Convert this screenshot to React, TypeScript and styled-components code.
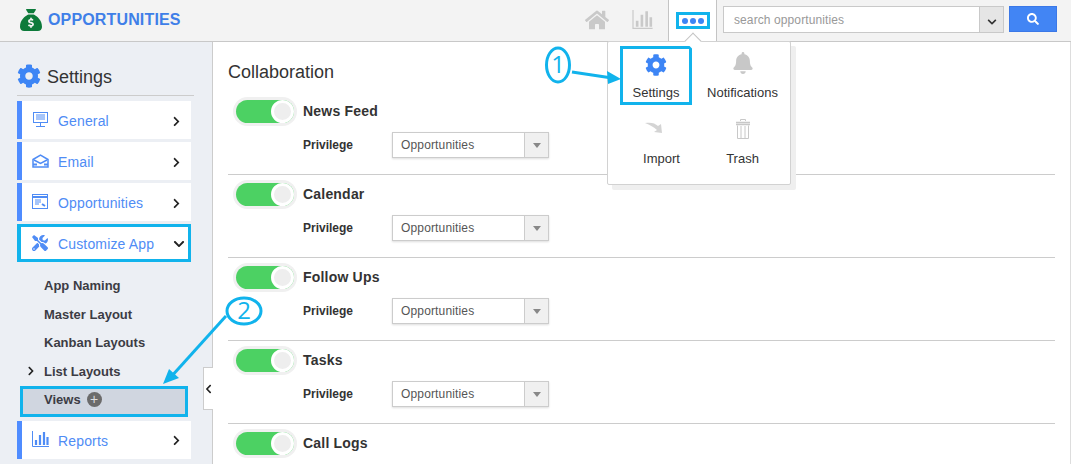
import React from "react";
import styled, { createGlobalStyle } from "styled-components";
import { FaCog, FaHome, FaBell, FaTools, FaSearch, FaChevronRight, FaChevronDown, FaChevronLeft } from "react-icons/fa";
import { FaSackDollar } from "react-icons/fa6";

const Global = createGlobalStyle`
  html, body { margin: 0; padding: 0; background: #fff; }
  body { font-family: "Liberation Sans", Arial, sans-serif; color: #333; width: 1071px; height: 464px; overflow: hidden; }
  * { box-sizing: border-box; }
`;
const Page = styled.div`position: relative; width: 1071px; height: 464px; overflow: hidden; display: flex; flex-direction: column;`;
const Header = styled.header`height: 42px; flex: none; display: flex; align-items: stretch; background: #f3f3f3; border-bottom: 1px solid #c8c8c8; padding-left: 20px;`;
const Brand = styled.div`display: flex; align-items: center; gap: 6px; color: #3f7fe8; font-weight: 700; font-size: 16px; letter-spacing: 0.15px; height: 40px; width: 560px;
  svg { color: #0d7a3a; margin-top: -1px; }`;
const TopIcons = styled.div`display: flex; align-items: center; gap: 23px; color: #c9c9c9; margin-left: 5px; width: 83px; padding-bottom: 2px;`;
const MoreCell = styled.div`position: relative; width: 49px; height: 42px; background: #fff; border-left: 1px solid #c4c4c4; border-right: 1px solid #c4c4c4; margin-bottom: -1px; display: flex; align-items: flex-start; justify-content: center; padding-top: 12px;`;
const MoreBox = styled.div`width: 34px; height: 17px; border: 3px solid #11b3ec; display: flex; align-items: center; justify-content: center; gap: 2px;`;
const Dot = styled.span`width: 6px; height: 6px; border-radius: 50%; background: #3d85f5;`;
const SearchArea = styled.div`display: flex; align-items: flex-start; padding: 6px 0 0 6px;`;
const SearchInput = styled.div`width: 256px; height: 27px; background: #fff; border: 1px solid #c9c9c9; border-right: 0; font-size: 12px; letter-spacing: 0.1px; color: #999; display: flex; align-items: center; padding-left: 10px;`;
const SearchCaret = styled.div`width: 25px; height: 27px; background: #e5e5e5; border: 1px solid #c9c9c9; display: flex; align-items: flex-end; justify-content: center; padding-bottom: 5px; color: #333;`;
const SearchBtn = styled.button`width: 48px; height: 26px; margin-left: 5px; background: #4285f4; border: 1px solid #3b78e7; color: #fff; padding: 0; display: flex; align-items: center; justify-content: center;`;

const Body = styled.div`flex: 1; display: flex; min-height: 0;`;
const Sidebar = styled.aside`position: relative; width: 213px; flex: none; background: #eceff4; border-right: 1px solid #ccc; padding: 20px 0 0 17px;`;
const SideTitle = styled.div`width: 177px; height: 34px; border-bottom: 1px solid #ccc; display: flex; align-items: flex-start; gap: 6px; font-size: 18px; color: #333; padding-top: 2px; margin-bottom: 5px; svg { color: #3d85f5; } span { margin-top: 3px; }`;
const NavItem = styled.div<{ $framed?: boolean }>`
  width: 174px; height: 38px; background: #fff; border-left: 5px solid #4f8cff; margin-bottom: 3px; padding: 2px 9px 0 10px;
  display: flex; align-items: center; color: #4f8cf5; font-size: 14px; letter-spacing: 0.15px;
  ${(p) => p.$framed && `border: 3px solid #11b3ec; border-left: 4px solid #11b3ec; padding-left: 11px; padding-right: 3px; width: 174px; margin-top: 1px;`}
`;
const NavIcon = styled.span`width: 26px; flex: none; display: flex; align-items: center; margin-top: -3px; color: #4f8cf5;`;
const NavLabel = styled.span`flex: 1;`;
const NavChev = styled.span`display: flex; color: #222;`;
const SubList = styled.div`padding: 6px 0 4px 3px; display: flex; flex-direction: column;`;
const SubItem = styled.div`position: relative; height: 28.7px; padding-left: 24px; display: flex; align-items: center; font-size: 13px; font-weight: 700; color: #3c3c44; svg { position: absolute; left: 6px; top: 9px; color: #222; }`;
const ViewsRow = styled.div`width: 168px; height: 31px; background: #d0d6e0; border: 3px solid #11b3ec; display: flex; align-items: center; gap: 6px; padding: 0 0 4px 21px; font-size: 13px; font-weight: 700; color: #3c3c44;`;
const PlusBadge = styled.span`width: 15px; height: 15px; border-radius: 50%; background: #6b6b6b; color: #ddd; font-size: 14px; line-height: 14px; font-weight: 400; text-align: center;`;
const Collapse = styled.div`position: absolute; left: 203px; top: 325px; width: 10px; height: 43px; background: #fff; border: 1px solid #ccc; border-right: 0; display: flex; align-items: center; justify-content: center; color: #222;`;

const Main = styled.main`flex: 1; background: #fff; padding: 20px 15px 0 15px; border-right: 1px solid #ddd;`;
const Heading = styled.h2`margin: 0 0 9px; font-size: 18px; font-weight: 400; line-height: 21px; color: #333;`;
const Section = styled.section`height: 83px; border-bottom: 1px solid #ccc; padding: 6px 0 0 8px;`;
const SectionHead = styled.div`display: flex; align-items: center; gap: 9px; height: 26px;`;
const Toggle = styled.div`position: relative; width: 58px; height: 23px; border-radius: 12px; background: #4cd163; box-shadow: 0 0 0 3px #f0f0f0;`;
const Knob = styled.span`position: absolute; right: 0; top: 0; width: 23px; height: 23px; border-radius: 50%; background: #eee; border: 3px solid #fff;`;
const SectionName = styled.span`font-size: 14px; font-weight: 700; letter-spacing: 0.2px; color: #333;`;
const PrivRow = styled.div`display: flex; align-items: center; margin: 8px 0 0 67px; height: 26px;`;
const PrivLabel = styled.span`width: 89px; font-size: 12px; font-weight: 700; color: #333;`;
const Select = styled.div`width: 157px; height: 26px; display: flex; border: 1px solid #ccc; background: #fff; box-shadow: 0 1px 2px #ddd;`;
const SelectValue = styled.span`flex: 1; font-size: 12px; letter-spacing: 0.15px; color: #555; display: flex; align-items: center; padding-left: 8px;`;
const SelectArrow = styled.span`width: 24px; background: #f0f0f0; border-left: 1px solid #ccc; display: flex; align-items: center; justify-content: center;
  &::before { content: ""; border: 4px solid transparent; border-top: 5px solid #888; border-bottom: 0; }`;

const Popup = styled.div`position: absolute; left: 607px; top: 41px; width: 184px; height: 144px; background: #fff; border: 1px solid #d2d2d2; border-radius: 2px; box-shadow: 5px 5px 0 #efefef; display: grid; grid-template-columns: 90px 90px; grid-template-rows: 66px 66px; padding-top: 2px;
  &::before { content: ""; position: absolute; left: 79px; top: -7px; width: 11px; height: 11px; background: #fff; border-left: 1px solid #c4c4c4; border-top: 1px solid #c4c4c4; transform: rotate(45deg); }`;
const PopItem = styled.div<{ $framed?: boolean }>`display: flex; flex-direction: column; align-items: center; gap: 11px; font-size: 13px; color: #333; padding-top: 6px; height: 59px; width: 89px; margin: 2px 0 0 0; svg { height: 22px; color: #c8c8c8; }
  ${(p) => p.$framed && `width: 72px; margin: 2px 0 0 12px; border: 3px solid #11b3ec; padding-top: 5px; gap: 9px; svg { color: #3d85f5; }`}`;
const ImportItem = styled(PopItem)`padding-left: 18px; svg { margin-left: -12px; }`;
const Annot = styled.svg`position: absolute; left: 0; top: 0; pointer-events: none;`;
const AnnotNum = styled.div<{ $x: number; $y: number }>`position: absolute; left: ${(p) => p.$x}px; top: ${(p) => p.$y}px; width: 26px; height: 24px; font-size: 24px; font-weight: 400; font-family: "Open Sans", sans-serif; line-height: 24px; text-align: center; color: #11b3ec;`;

const sections = [
  { name: "News Feed", privilege: true },
  { name: "Calendar", privilege: true },
  { name: "Follow Ups", privilege: true },
  { name: "Tasks", privilege: true },
  { name: "Call Logs", privilege: false },
];

const Monitor = () => (
  <svg width="17" height="16" viewBox="0 0 17 16" fill="none" stroke="currentColor"><rect x="1.5" y="0.5" width="14" height="10" /><path d="M4 3h9M4 5h9M4 7h9M8.5 11v3M4 14.5h9" /></svg>
);
const Env = () => (
  <svg width="17" height="14" viewBox="0 0 17 14" fill="none" stroke="currentColor"><path d="M1 5.5 8.5 1 16 5.5V13H1z" strokeWidth="1.5" /><path d="M2 6l6.5 3.5L15 6" strokeWidth="1.5" /><path d="M1 10.5h4M12 10.5h4" strokeWidth="2" /></svg>
);
const AppWin = () => (
  <svg width="16" height="15" viewBox="0 0 16 15" fill="none" stroke="currentColor"><rect x="0.5" y="0.5" width="15" height="14" /><path d="M1 3h14" strokeWidth="2" /><path d="M3 6h6M3 8h6M3 10h4" /><path d="M10 10l3 2" strokeWidth="2" /></svg>
);
const Bars = ({ h = 16, w = 17 }: { h?: number; w?: number }) => (
  <svg width={w} height={h} viewBox="0 0 17 16" fill="none" stroke="currentColor"><path d="M.5 0v15.5H17" /><path d="M4 14V9M8 14V4M12 14V1M15.5 14V6" strokeWidth="2.2" /></svg>
);
const Trash = () => (
  <svg width="16" height="22" viewBox="0 0 16 22" fill="none" stroke="#c8c8c8"><path d="M1 6.5h14M1 4.5h14" strokeWidth="1.5" /><path d="M5.5 3V1.5h5V3" /><path d="M2.5 7.5v13h11v-13M6 8v12M10 8v12" /></svg>
);
const ImportArrow = () => (
  <svg width="22" height="22" viewBox="0 0 22 22" fill="#d4d4d4"><path d="M0 5c6-1 10 0 13 3l3-2 1 9-8-1 3-2C9 9 5 7 0 5z" /></svg>
);

export default function App() {
  return (
    <Page>
      <Global />
      <Header>
        <Brand><FaSackDollar size={22} /><span>OPPORTUNITIES</span></Brand>
        <TopIcons><FaHome size={24} /><Bars h={19} w={21} /></TopIcons>
        <MoreCell><MoreBox><Dot /><Dot /><Dot /></MoreBox></MoreCell>
        <SearchArea>
          <SearchInput>search opportunities</SearchInput>
          <SearchCaret><FaChevronDown size={10} /></SearchCaret>
          <SearchBtn><FaSearch size={12} /></SearchBtn>
        </SearchArea>
      </Header>
      <Body>
        <Sidebar>
          <SideTitle><FaCog size={24} /><span>Settings</span></SideTitle>
          <NavItem><NavIcon><Monitor /></NavIcon><NavLabel>General</NavLabel><NavChev><FaChevronRight size={11} /></NavChev></NavItem>
          <NavItem><NavIcon><Env /></NavIcon><NavLabel>Email</NavLabel><NavChev><FaChevronRight size={11} /></NavChev></NavItem>
          <NavItem><NavIcon><AppWin /></NavIcon><NavLabel>Opportunities</NavLabel><NavChev><FaChevronRight size={11} /></NavChev></NavItem>
          <NavItem $framed><NavIcon><FaTools size={16} /></NavIcon><NavLabel>Customize App</NavLabel><NavChev><FaChevronDown size={12} /></NavChev></NavItem>
          <SubList>
            <SubItem>App Naming</SubItem>
            <SubItem>Master Layout</SubItem>
            <SubItem>Kanban Layouts</SubItem>
            <SubItem><FaChevronRight size={10} />List Layouts</SubItem>
            <ViewsRow>Views<PlusBadge>+</PlusBadge></ViewsRow>
          </SubList>
          <NavItem><NavIcon><Bars /></NavIcon><NavLabel>Reports</NavLabel><NavChev><FaChevronRight size={11} /></NavChev></NavItem>
          <Collapse><FaChevronLeft size={10} /></Collapse>
        </Sidebar>
        <Main>
          <Heading>Collaboration</Heading>
          {sections.map((s) => (
            <Section key={s.name}>
              <SectionHead><Toggle><Knob /></Toggle><SectionName>{s.name}</SectionName></SectionHead>
              {s.privilege && (
                <PrivRow><PrivLabel>Privilege</PrivLabel><Select><SelectValue>Opportunities</SelectValue><SelectArrow /></Select></PrivRow>
              )}
            </Section>
          ))}
        </Main>
      </Body>
      <Popup>
        <PopItem $framed><FaCog size={22} />Settings</PopItem>
        <PopItem><FaBell size={22} />Notifications</PopItem>
        <ImportItem><ImportArrow />Import</ImportItem>
        <PopItem><Trash />Trash</PopItem>
      </Popup>
      <Annot width="1071" height="464" viewBox="0 0 1071 464" fill="none">
        <ellipse cx="558" cy="65" rx="11.5" ry="17" stroke="#11b3ec" strokeWidth="3" fill="#fff" />
        <path d="M572 72 612 78" stroke="#11b3ec" strokeWidth="3" />
        <path d="M621 79 607 71 608 84z" fill="#11b3ec" />
        <ellipse cx="244" cy="311" rx="17" ry="13" stroke="#11b3ec" strokeWidth="3" fill="#fff" />
        <path d="M226 316 170 378" stroke="#11b3ec" strokeWidth="3" />
        <path d="M163 384 169 369 179 378z" fill="#11b3ec" />
      </Annot>
      <AnnotNum $x={545} $y={52}>1</AnnotNum>
      <AnnotNum $x={231} $y={298}>2</AnnotNum>
    </Page>
  );
}
